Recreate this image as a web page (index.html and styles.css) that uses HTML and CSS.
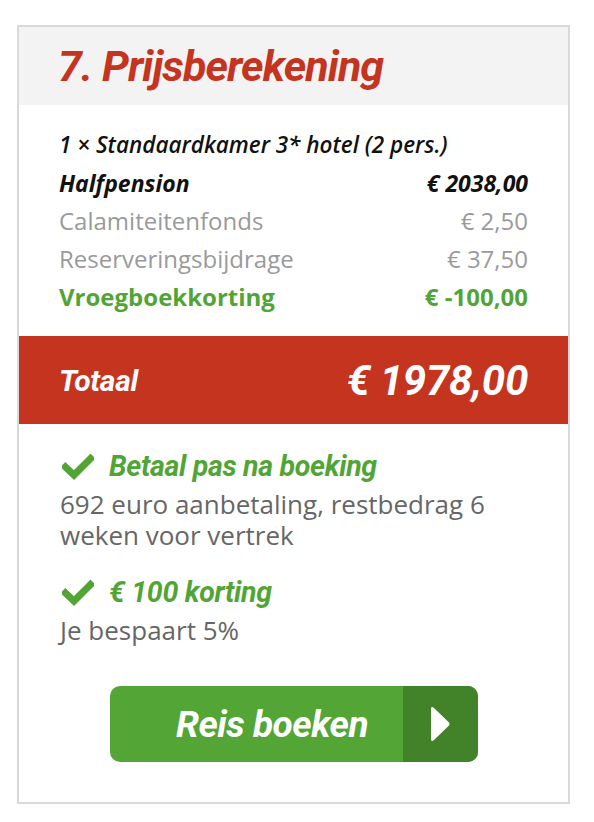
FILE: index.html
```html
<!DOCTYPE html>
<html lang="nl">
<head>
<meta charset="utf-8">
<title>Prijsberekening</title>
<link rel="stylesheet" href="styles.css">
</head>
<body>
<section class="card">
  <header class="card-head">
    <h2 class="title">7. Prijsberekening</h2>
  </header>
  <div class="lines">
    <div class="room">1 × Standaardkamer 3* hotel (2 pers.)</div>
    <div class="row row-main"><span>Halfpension</span><span>€ 2038,00</span></div>
    <div class="row row-muted"><span>Calamiteitenfonds</span><span>€ 2,50</span></div>
    <div class="row row-muted"><span>Reserveringsbijdrage</span><span>€ 37,50</span></div>
    <div class="row row-green"><span>Vroegboekkorting</span><span>€ -100,00</span></div>
  </div>
  <div class="total"><span class="total-label">Totaal</span><span class="total-amount">€ 1978,00</span></div>
  <div class="perks">
    <div class="perk">
      <div class="perk-title">
        <svg class="check" viewBox="0 0 32 26" aria-hidden="true"><path d="M3.5 13 L12 21 L28.5 4.5" fill="none" stroke="#52a535" stroke-width="7" stroke-linecap="square" stroke-linejoin="miter"/></svg>
        <span>Betaal pas na boeking</span>
      </div>
      <p class="perk-text">692 euro aanbetaling, restbedrag 6 weken voor vertrek</p>
    </div>
    <div class="perk">
      <div class="perk-title">
        <svg class="check" viewBox="0 0 32 26" aria-hidden="true"><path d="M3.5 13 L12 21 L28.5 4.5" fill="none" stroke="#52a535" stroke-width="7" stroke-linecap="square" stroke-linejoin="miter"/></svg>
        <span>€ 100 korting</span>
      </div>
      <p class="perk-text">Je bespaart 5%</p>
    </div>
  </div>
  <div class="cta-wrap">
    <a class="cta" href="#">
      <span class="cta-label">Reis boeken</span>
      <span class="cta-arrow"><svg viewBox="0 0 22 38" aria-hidden="true"><path d="M2 4 Q2 0.5 5 3 L19.5 17 Q21.5 19 19.5 21 L5 35 Q2 37.5 2 34 Z" fill="#fff"/></svg></span>
    </a>
  </div>
</section>
</body>
</html>
```

FILE: styles.css
```css
* { box-sizing: border-box; }
html, body { margin: 0; padding: 0; background: #fff; }
body { padding: 25px 0 0 17px; }

.card {
  width: 553px;
  height: 779px;
  border: 2px solid #d9d9d9;
  background: #fff;
}

.card-head {
  height: 78px;
  background: #f3f3f3;
  display: flex;
  align-items: center;
  padding-left: 39px;
}
.title {
  margin: 0;
  font-family: Roboto, "Liberation Sans", sans-serif;
  font-style: italic;
  font-weight: 700;
  font-size: 43px;
  letter-spacing: -0.9px;
  color: #c4341f;
}

.lines {
  padding: 21px 40px 20px 40px;
}
.room {
  font-family: "Open Sans", sans-serif;
  font-style: italic;
  font-weight: 600;
  font-size: 22.5px;
  line-height: 38px;
  color: #111;
}
.row {
  display: flex;
  justify-content: space-between;
  line-height: 38px;
}
.row-main {
  font-family: "Open Sans", sans-serif;
  font-style: italic;
  font-weight: 700;
  font-size: 23px;
  color: #111;
}
.row-muted {
  font-family: "Open Sans", sans-serif;
  font-size: 24px;
  color: #9a9a9a;
}
.row-green {
  font-family: "Open Sans", sans-serif;
  font-weight: 700;
  font-size: 24px;
  color: #52a535;
}

.total {
  height: 88px;
  background: #c4341f;
  color: #fff;
  display: flex;
  justify-content: space-between;
  align-items: center;
  padding: 0 40px;
  font-family: Roboto, "Liberation Sans", sans-serif;
  font-style: italic;
  font-weight: 700;
}
.total-label { font-size: 30px; letter-spacing: -0.3px; }
.total-amount { font-size: 42px; letter-spacing: -0.3px; }

.perks {
  padding: 25px 40px 0 43px;
}
.perk + .perk { margin-top: 24px; }
.perk-title {
  display: flex;
  align-items: center;
  gap: 15px;
  font-family: Roboto, "Liberation Sans", sans-serif;
  font-style: italic;
  font-weight: 700;
  font-size: 28.5px;
  letter-spacing: -0.3px;
  color: #52a535;
  line-height: 36px;
}
.check { width: 32px; height: 26px; flex: none; }
.perk-text {
  margin: 4px 0 0 -2px;
  font-family: "Open Sans", sans-serif;
  font-size: 26px;
  line-height: 31px;
  color: #666;
}

.cta-wrap {
  display: flex;
  justify-content: center;
  padding-top: 40px;
}
.cta {
  display: flex;
  width: 368px;
  height: 76px;
  border-radius: 10px;
  overflow: hidden;
  text-decoration: none;
  background: #53a535;
}
.cta-label {
  flex: 1;
  display: flex;
  align-items: center;
  justify-content: center;
  padding-left: 32px;
  font-family: Roboto, "Liberation Sans", sans-serif;
  font-style: italic;
  font-weight: 700;
  font-size: 37px;
  letter-spacing: -0.5px;
  color: #fff;
}
.cta-arrow {
  width: 75px;
  background: #42832a;
  display: flex;
  align-items: center;
  justify-content: center;
}
.cta-arrow svg { width: 22px; height: 38px; }
```
